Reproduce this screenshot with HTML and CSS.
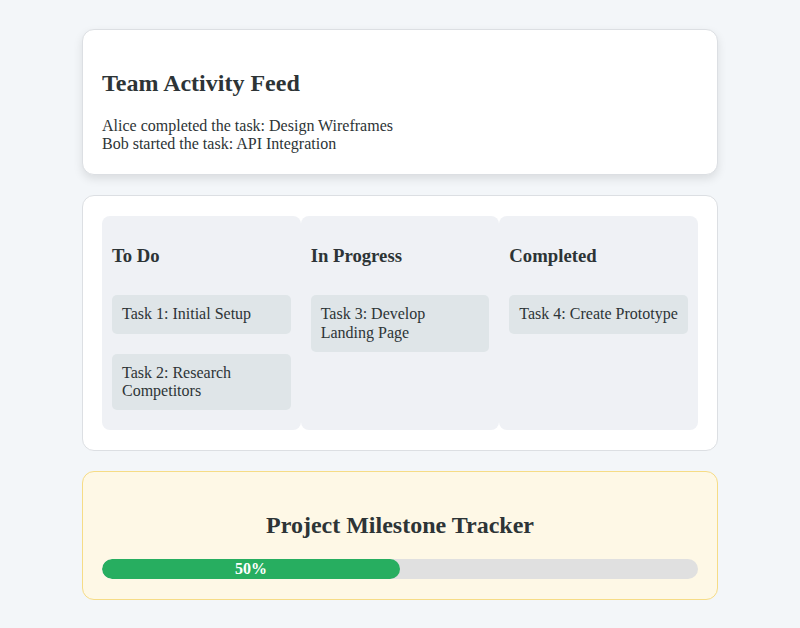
FILE: index.html
```html
<!DOCTYPE html>
<html lang="en">
<head>
<meta charset="utf-8">
<title>Team Dashboard</title>
<link rel="stylesheet" href="styles.css">
</head>
<body>
<main class="container">
  <section class="card feed">
    <h2 class="title">Team Activity Feed</h2>
    <div class="feed-list">
      <div class="feed-item">Alice completed the task: Design Wireframes</div>
      <div class="feed-item">Bob started the task: API Integration</div>
    </div>
  </section>

  <section class="card board">
    <div class="columns">
      <div class="column">
        <h3 class="column-title">To Do</h3>
        <div class="task">Task 1: Initial Setup</div>
        <div class="task">Task 2: Research Competitors</div>
      </div>
      <div class="column">
        <h3 class="column-title">In Progress</h3>
        <div class="task">Task 3: Develop Landing Page</div>
      </div>
      <div class="column">
        <h3 class="column-title">Completed</h3>
        <div class="task">Task 4: Create Prototype</div>
      </div>
    </div>
  </section>

  <section class="card milestone">
    <h2 class="title center">Project Milestone Tracker</h2>
    <div class="progress">
      <div class="progress-fill" style="width: 50%">50%</div>
    </div>
  </section>
</main>
</body>
</html>
```

FILE: styles.css
```css
* { box-sizing: border-box; }

html, body {
  margin: 0;
  padding: 0;
}

body {
  background: #f3f6f9;
  font-family: "Liberation Serif", "Times New Roman", serif;
  color: #2d3436;
  font-size: 16px;
}

.container {
  width: 636px;
  margin: 29px auto 0;
}

.card {
  background: #ffffff;
  border: 1px solid #dcdfe3;
  border-radius: 12px;
  padding: 20px 19px;
  margin-bottom: 20px;
}

.feed {
  box-shadow: 0 4px 10px rgba(0, 0, 0, 0.1);
}

.title {
  font-size: 24px;
  font-weight: bold;
  margin: 20px 0;
  color: #2d3436;
}

.title.center {
  text-align: center;
}

.feed-item {
  line-height: 18.4px;
}

.columns {
  display: flex;
}

.column {
  flex: 1;
  background: #eff1f5;
  border-radius: 8px;
  padding: 10px;
  display: flex;
  flex-direction: column;
}

.column-title {
  font-size: 18.72px;
  margin: 18.72px 0;
}

.task {
  background: #dfe5e8;
  border-radius: 5px;
  padding: 10px;
  margin: 10px 0;
  line-height: 18.4px;
}

.milestone {
  background: #fef8e6;
  border-color: #f6dc86;
}

.progress {
  height: 20px;
  background: #e0e0e0;
  border-radius: 10px;
  overflow: hidden;
}

.progress-fill {
  height: 100%;
  background: #27ae60;
  border-radius: 10px;
  color: #ffffff;
  font-weight: bold;
  text-align: center;
  line-height: 20px;
}
```
